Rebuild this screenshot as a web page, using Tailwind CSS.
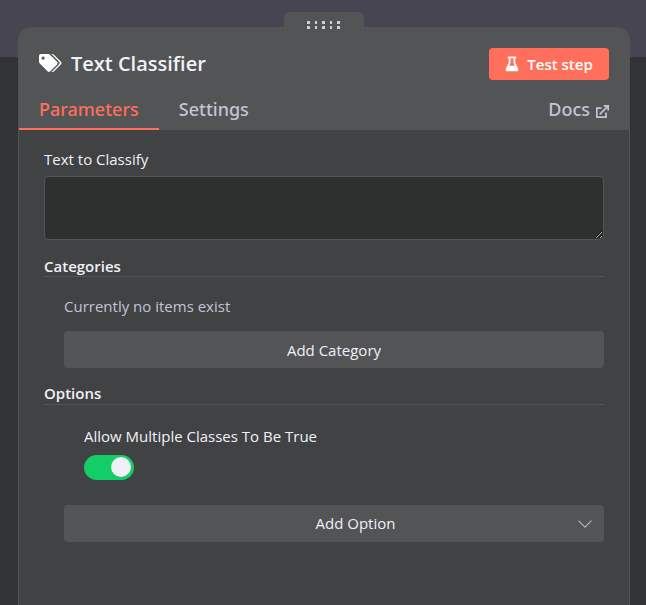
<!DOCTYPE html>
<html lang="en">
<head>
    <meta charset="UTF-8">
    <meta name="viewport" content="width=device-width, initial-scale=1.0">
    <title>Text Classifier</title>
    <script src="https://cdn.jsdelivr.net/npm/@tailwindcss/browser@4"></script>
</head>
<body class="relative flex flex-col min-h-screen overflow-x-hidden bg-[#323334] font-['Open_Sans',sans-serif] text-[15px] leading-5 text-[#f0f1f7]">
    <!-- Top band behind the panel -->
    <div class="absolute inset-x-0 top-0 h-[57px] bg-[#474552]"></div>

    <main class="relative flex-1 flex flex-col ml-[18px] mr-4 pt-3">
        <!-- Drag handle -->
        <div class="relative z-10 self-center w-20 h-[15px] pt-[9px] rounded-t-md bg-[#525456]">
            <svg class="mx-auto overflow-visible" width="34" height="8" viewBox="0 0 34 8" fill="#ccd0dc" aria-hidden="true">
                <path d="M0 0h3v3H0zM8 0h2v3H8zM15 0h3v3h-3zM23 0h2v3h-2zM30 0h3v3h-3zM0 5h3v3H0zM8 5h2v3H8zM15 5h3v3h-3zM23 5h2v3h-2zM30 5h3v3h-3z"/>
            </svg>
        </div>

        <section class="flex-1 border border-b-0 border-[#525456] rounded-t-xl bg-[#414244]">
            <header class="pt-5 rounded-t-[11px] bg-[#525456]">
                <div class="flex items-center px-5">
                    <svg class="w-6 h-5 mr-2" viewBox="0 0 24 20" fill="#fff" aria-hidden="true">
                        <path fill-rule="evenodd" d="M2 0h7.200c.7 0 1.300.3 1.800.8l7 7c.8.8.8 1.900 0 2.700l-6.800 6.800c-.8.8-1.900.8-2.700 0L.8 9.500C.3 9 0 8.400 0 7.700V2C0 .9.9 0 2 0zm2.100 2.500a1.600 1.600 0 1 0 0 3.200 1.600 1.600 0 0 0 0-3.200z"/>
                        <path d="M11.700 0h1.400c.7 0 1.300.3 1.800.8l7 7c.8.8.8 1.900 0 2.700l-6.800 6.800c-.8.8-1.900.8-2.700 0l-.1-.1 7.200-7.100c.7-.7.7-1.500 0-2.200z"/>
                        <path d="M11.900 0l7.800 7.800c.8.8.8 1.900 0 2.700l-6.900 6.900" fill="none" stroke="#525456" stroke-width="1"/>
                    </svg>
                    <h1 class="flex-1 text-xl leading-8 font-semibold">Text Classifier</h1>
                    <button type="button" class="flex items-center justify-center gap-2 w-[120px] h-8 rounded-[4px] bg-[#ff6f5c] text-[15px] font-semibold text-white">
                        <svg class="w-[14px] h-4" viewBox="0 0 14 16" fill="#fff" aria-hidden="true">
                            <path fill-rule="evenodd" d="M2.800.5h8.400v1.700h-.9v4.200l2.900 6.400c.5 1.300-.2 2.500-1.600 2.500H2.400c-1.400 0-2.100-1.200-1.600-2.500l2.900-6.400V2.200h-.9zm2.700 1.700v4.600L4.200 9.700h5.600L8.500 6.800V2.200z"/>
                        </svg>
                        Test step
                    </button>
                </div>
                <nav class="flex mt-[10px] font-['Noto_Sans',sans-serif] text-lg leading-[38px] font-medium text-[#c1c5d6]">
                    <a href="#parameters" class="px-5 border-b-2 border-[#ff6f5c] text-[#ff6f5c]">Parameters</a>
                    <a href="#settings" class="px-5">Settings</a>
                    <a href="#docs" class="flex gap-[6px] ml-auto pr-5">
                        Docs
                        <svg class="w-[13px] h-[13px] mt-[15px]" viewBox="0 0 14 14" fill="none" stroke="#c1c5d6" stroke-width="1.800" aria-hidden="true">
                            <path d="M6 3.300H.9v9.800h9.900V8"/>
                            <path d="M4 10L12 2"/>
                            <path d="M8.200.9h4.900v4.900"/>
                            <path d="M9.500.3h4.200v4.200z" fill="#c1c5d6" stroke="none"/>
                        </svg>
                    </a>
                </nav>
            </header>

            <form id="parameters" class="px-[25px] pt-[19px]">
                <label for="input-text" class="block">Text to Classify</label>
                <textarea id="input-text" name="text" class="block w-full h-16 mt-[7px] px-3 py-2 border border-[#525456] rounded-[4px] bg-[#2e302f] resize-y focus:outline-none"></textarea>

                <h2 class="mt-4 border-b border-[#525456] font-semibold">Categories</h2>
                <div class="pt-[19px] pl-5">
                    <p class="text-[#c1c5d6]">Currently no items exist</p>
                    <button type="button" class="block w-full h-[37px] mt-[15px] rounded-[4px] bg-[#525456]">Add Category</button>
                </div>

                <h2 class="mt-[15px] pb-px border-b border-[#525456] font-semibold">Options</h2>
                <div class="pt-[21px] pl-5">
                    <div class="pl-5">
                        <label for="allow-multiple" class="block">Allow Multiple Classes To Be True</label>
                        <input type="checkbox" id="allow-multiple" name="allowMultiple" role="switch" checked
                               class="flex items-center justify-start w-[50px] h-[25px] mt-[9px] px-[3px] pb-px appearance-none rounded-full bg-[#525456] before:size-5 before:rounded-full before:bg-[#f0f1f7] checked:justify-end checked:bg-[#13ce66]">
                    </div>
                    <div class="grid items-center mt-[25px]">
                        <select aria-label="Add Option" name="option" class="col-start-1 row-start-1 w-full h-[37px] pb-[2px] pl-[43px] appearance-none rounded-[4px] bg-[#525456] text-center [text-align-last:center]">
                            <option>Add Option</option>
                        </select>
                        <svg class="col-start-1 row-start-1 justify-self-end w-[14px] h-2 mr-3 pointer-events-none" viewBox="0 0 14 8" fill="none" stroke="#b3b6c4" stroke-width="1.100" aria-hidden="true">
                            <path d="M.5.700L7 7.200 13.500.7"/>
                        </svg>
                    </div>
                </div>
            </form>
        </section>
    </main>
</body>
</html>
